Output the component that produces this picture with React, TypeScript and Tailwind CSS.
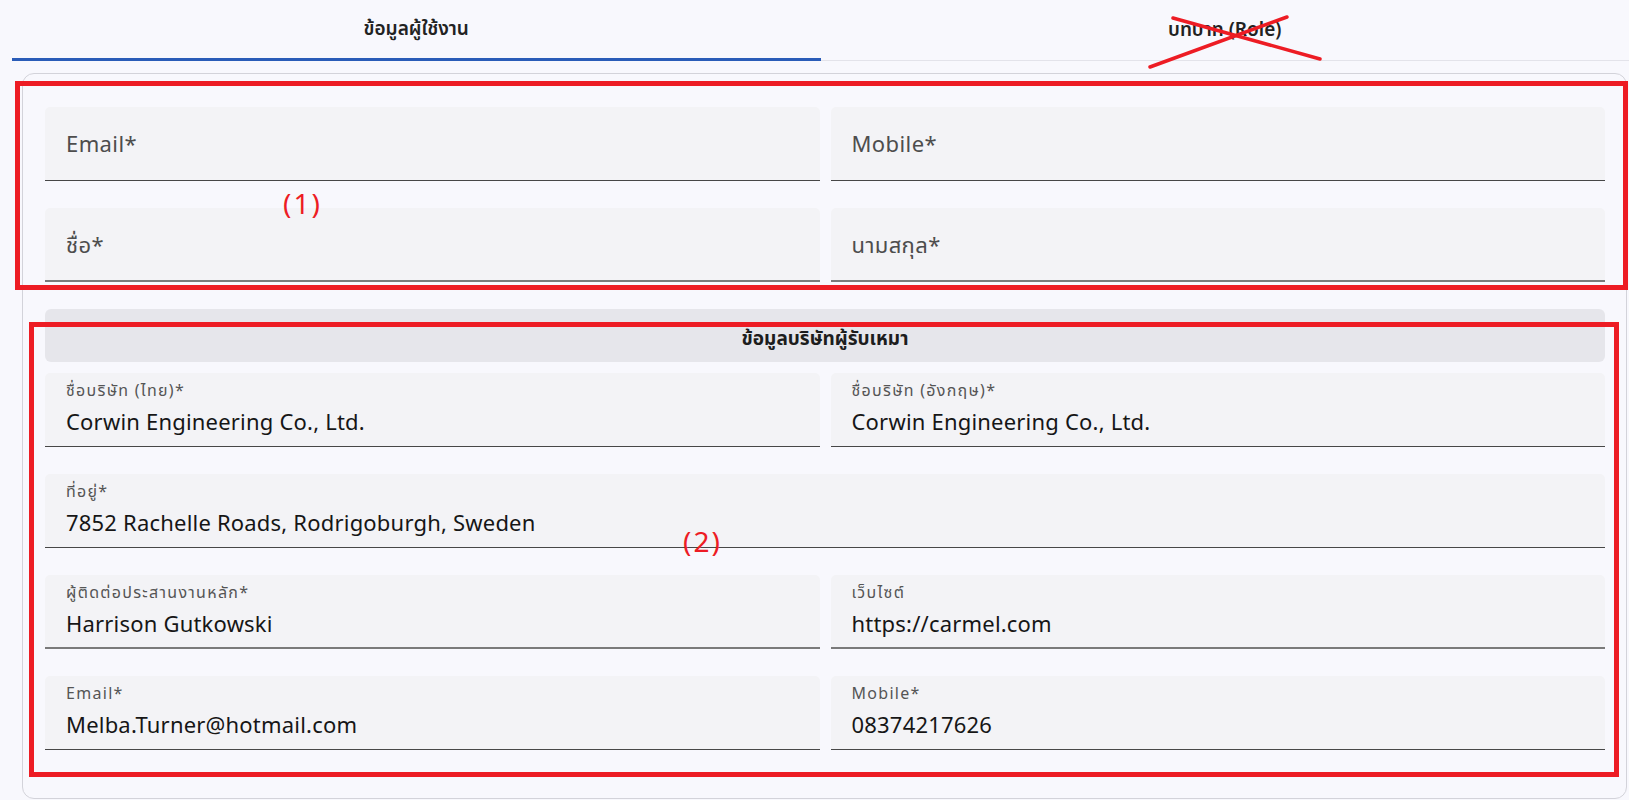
import React from 'react';

type FieldProps = {
  label: string;
  value?: string;
  thick?: boolean;
  className?: string;
};

const Field: React.FC<FieldProps> = ({ label, value, thick, className }) => {
  const line = thick ? 'border-b-2 border-[#7a7a7a]' : 'border-b border-[#474747]';
  if (!value) {
    return (
      <div className={`h-[74px] rounded-t-[5px] bg-[#f3f3f6] ${line} flex items-center pl-[21px] ${className ?? ''}`}>
        <span className="text-[22px] text-[#4d4d4d] tracking-[0.4px]">{label}</span>
      </div>
    );
  }
  return (
    <div className={`h-[74px] rounded-t-[5px] bg-[#f3f3f6] ${line} pl-[21px] pt-[7px] ${className ?? ''}`}>
      <div className="text-[16px] leading-[20px] tracking-[1.3px] text-[#555]">{label}</div>
      <div className="mt-[7px] text-[22px] leading-[28px] tracking-[0.2px] text-[#161616]">{value}</div>
    </div>
  );
};

export default function App() {
  return (
    <div className="relative min-h-[800px] bg-[#f8f8fd] font-['Noto_Sans','Noto_Sans_Thai',sans-serif] overflow-hidden">
      {/* Tabs */}
      <div className="grid grid-cols-2 pl-3">
        <div className="h-[61px] flex items-center justify-center border-b-[3px] border-[#2a5cb8] pb-[1px]">
          <span className="text-[19px] font-semibold text-[#222]">ข้อมูลผู้ใช้งาน</span>
        </div>
        <div className="h-[61px] flex items-center justify-center border-b border-[#e3e3ea] pb-[1px]">
          <span className="text-[19px] font-semibold text-[#222]">บทบาท (Role)</span>
        </div>
      </div>

      {/* Card */}
      <div className="mt-3 ml-[22px] mr-[2px] h-[726px] rounded-[12px] border-[1.5px] border-[#d3d3da] pl-[22px] pr-[21px] pt-[33px]">
        <div className="grid grid-cols-2 gap-x-[11px] gap-y-[27px]">
          <Field label="Email*" />
          <Field label="Mobile*" />
          <Field label="ชื่อ*" thick />
          <Field label="นามสกุล*" thick />
        </div>

        <div className="mt-[27px] h-[53px] rounded-[6px] bg-[#e6e6eb] flex items-center justify-center pt-[6px]">
          <span className="text-[19px] font-bold text-[#1d1d1d]">ข้อมูลบริษัทผู้รับเหมา</span>
        </div>

        <div className="mt-[11px] grid grid-cols-2 gap-x-[11px] gap-y-[27px]">
          <Field label="ชื่อบริษัท (ไทย)*" value="Corwin Engineering Co., Ltd." />
          <Field label="ชื่อบริษัท (อังกฤษ)*" value="Corwin Engineering Co., Ltd." />
          <Field className="col-span-2" label="ที่อยู่*" value="7852 Rachelle Roads, Rodrigoburgh, Sweden" />
          <Field label="ผู้ติดต่อประสานงานหลัก*" value="Harrison Gutkowski" thick />
          <Field label="เว็บไซต์" value="https://carmel.com" thick />
          <Field label="Email*" value="Melba.Turner@hotmail.com" />
          <Field label="Mobile*" value="08374217626" />
        </div>
      </div>

      {/* Annotations */}
      <div className="absolute left-[15px] top-[81px] w-[1613px] h-[209px] border-[5px] border-[#ed1c24] pointer-events-none" />
      <div className="absolute left-[29px] top-[322px] w-[1590px] h-[455px] border-[5px] border-[#ed1c24] pointer-events-none" />
      <span className="absolute left-[283px] top-[184px] text-[28px] leading-[38px] tracking-[2px] text-[#ed1c24]">(1)</span>
      <span className="absolute left-[683px] top-[522px] text-[28px] leading-[38px] tracking-[2px] text-[#ed1c24]">(2)</span>
      <svg className="absolute left-0 top-0 pointer-events-none" width="1629" height="100" viewBox="0 0 1629 100">
        <line x1="1150" y1="67" x2="1287" y2="17" stroke="#ed1c24" strokeWidth="3.5" strokeLinecap="round" />
        <line x1="1173" y1="18" x2="1320" y2="59" stroke="#ed1c24" strokeWidth="3.5" strokeLinecap="round" />
      </svg>
    </div>
  );
}
